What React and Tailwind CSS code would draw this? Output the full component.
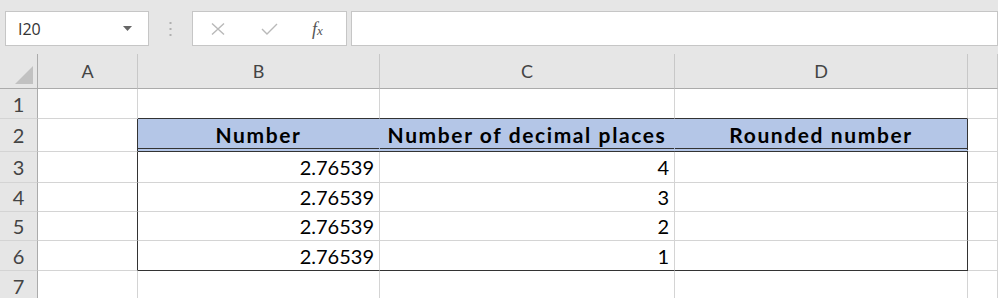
import React from "react";

const GRID = "border-[#d4d4d4]";
const cellFont = { fontFamily: "Lato, 'Open Sans', sans-serif" };

function RowHeader({ n, h }) {
  return (
    <div
      className={`flex items-center justify-center border-r border-b border-r-[#ababab] border-b-[#d4d4d4] bg-[#e6e6e6] text-[20px] text-[#444] ${h}`}
      style={cellFont}
    >
      {n}
    </div>
  );
}

function Cell({ className = "", children }) {
  return (
    <div
      className={`flex items-center border-r border-b ${GRID} bg-white text-[20px] text-black ${className}`}
      style={cellFont}
    >
      {children}
    </div>
  );
}

const HEAD = "h-[33px] !bg-[#b4c6e7] border-b-4 border-double border-b-[#333] justify-center font-bold !text-[21px] tracking-[1.6px] pt-[3px] text-[#111]";

export default function App() {
  const dataRows = [
    { n: 3, v: "4", h: "h-[31px]" },
    { n: 4, v: "3", h: "h-[29px]" },
    { n: 5, v: "2", h: "h-[29px]" },
    { n: 6, v: "1", h: "h-[30px]" },
  ];
  return (
    <div className="w-[998px] h-[298px] overflow-hidden bg-white">
      {/* Formula bar area */}
      <div className="h-[54px] bg-[#e6e6e6] pt-[11px] flex items-start">
        <div className="ml-[5px] w-[144px] h-[35px] bg-white border border-[#c6c6c6] flex items-center justify-between pl-[12px] pr-[16px]">
          <span className="text-[16px] text-[#333]" style={{ fontFamily: "'Open Sans', sans-serif" }}>
            I20
          </span>
          <svg width="9" height="5" viewBox="0 0 9 5">
            <path d="M0 0 L9 0 L4.5 5 Z" fill="#666" />
          </svg>
        </div>
        <div className="w-[43px] h-[35px] flex items-center justify-center">
          <svg width="3" height="14" viewBox="0 0 3 14">
            <rect x="0.5" y="0" width="2" height="2" fill="#b0b0b0" />
            <rect x="0.5" y="6" width="2" height="2" fill="#b0b0b0" />
            <rect x="0.5" y="12" width="2" height="2" fill="#b0b0b0" />
          </svg>
        </div>
        <div className="w-[155px] h-[35px] bg-white border border-[#c6c6c6] flex items-center">
          <svg className="ml-[18px]" width="14" height="12" viewBox="0 0 14 12">
            <path d="M1 0.5 L13 11.5 M13 0.5 L1 11.5" stroke="#b9b9b9" strokeWidth="1.4" fill="none" />
          </svg>
          <svg className="ml-[36px]" width="17" height="12" viewBox="0 0 17 12">
            <path d="M1 6 L6 11 L16 1" stroke="#b9b9b9" strokeWidth="1.4" fill="none" />
          </svg>
          <span
            className="ml-[34px] text-[18px] italic text-[#555] leading-none"
            style={{ fontFamily: "'Liberation Serif', serif" }}
          >
            f<span className="text-[13px]">x</span>
          </span>
        </div>
        <div className="ml-[4px] flex-1 h-[35px] bg-white border border-[#c6c6c6]" />
      </div>

      {/* Grid */}
      <div
        className="grid grid-cols-[38px_100px_242px_295px_293px_1fr]"
        style={cellFont}
      >
        {/* column headers */}
        <div className="h-[35px] bg-[#e6e6e6] border-r border-b border-[#ababab] flex items-end justify-end pr-[4px] pb-[4px]">
          <svg width="18" height="18" viewBox="0 0 18 18">
            <path d="M18 0 L18 18 L0 18 Z" fill="#c1c1c1" />
          </svg>
        </div>
        {["A", "B", "C", "D", ""].map((l, i) => (
          <div
            key={i}
            className="h-[35px] bg-[#e6e6e6] border-r border-b border-r-[#c8c8c8] border-b-[#ababab] flex items-center justify-center text-[18px] text-[#444]"
          >
            {l}
          </div>
        ))}

        {/* row 1 */}
        <RowHeader n={1} h="h-[30px]" />
        <Cell className="h-[30px]" />
        <Cell className="h-[30px] border-b-[#333]" />
        <Cell className="h-[30px] border-b-[#333]" />
        <Cell className="h-[30px] border-b-[#333]" />
        <Cell className="h-[30px]" />

        {/* row 2 */}
        <RowHeader n={2} h="h-[33px]" />
        <Cell className="h-[33px] border-r-[#333]" />
        <Cell className={`${HEAD} border-r-[#b4c6e7]`}>Number</Cell>
        <Cell className={`${HEAD} border-r-[#b4c6e7]`}>Number of decimal places</Cell>
        <Cell className={`${HEAD} border-r-[#333]`}>Rounded number</Cell>
        <Cell className="h-[33px]" />

        {dataRows.map((r, idx) => {
          const last = idx === dataRows.length - 1;
          const bb = last ? "border-b-[#333]" : "";
          return (
            <React.Fragment key={r.n}>
              <RowHeader n={r.n} h={r.h} />
              <Cell className={`${r.h} border-r-[#333]`} />
              <Cell className={`${r.h} ${bb} justify-end pr-[5px]`}>2.76539</Cell>
              <Cell className={`${r.h} ${bb} justify-end pr-[5px]`}>{r.v}</Cell>
              <Cell className={`${r.h} ${bb} border-r-[#333]`} />
              <Cell className={r.h} />
            </React.Fragment>
          );
        })}

        {/* row 7 */}
        <RowHeader n={7} h="h-[30px]" />
        <Cell className="h-[30px]" />
        <Cell className="h-[30px]" />
        <Cell className="h-[30px]" />
        <Cell className="h-[30px]" />
        <Cell className="h-[30px]" />
      </div>
    </div>
  );
}
